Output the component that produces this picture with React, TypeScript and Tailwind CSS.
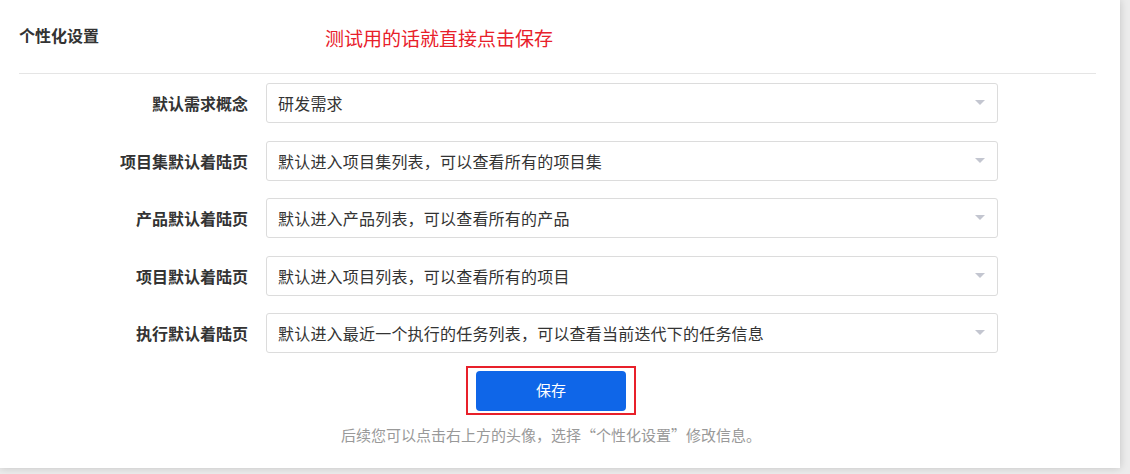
const fields = [
  { label: "默认需求概念", value: "研发需求" },
  { label: "项目集默认着陆页", value: "默认进入项目集列表，可以查看所有的项目集" },
  { label: "产品默认着陆页", value: "默认进入产品列表，可以查看所有的产品" },
  { label: "项目默认着陆页", value: "默认进入项目列表，可以查看所有的项目" },
  {
    label: "执行默认着陆页",
    value: "默认进入最近一个执行的任务列表，可以查看当前迭代下的任务信息",
  },
];

const SelectBox = ({ value }: { value: string }) => (
  <div className="w-[732px] h-10 flex items-center justify-between pl-[11px] pr-[11px] border border-[#dcdcdc] rounded-[3px] bg-white">
    <span className="text-[16px] tracking-[0.2px] text-[#333]">{value}</span>
    <svg width="10" height="6" viewBox="0 0 10 6" className="mr-[1px]">
      <path d="M0 0 L10 0 L5 5 Z" fill="#c3c6d0" />
    </svg>
  </div>
);

const App = () => {
  return (
    <div
      className="w-[1130px] h-[474px] bg-[#ececec] overflow-hidden"
      style={{ fontFamily: '"Noto Sans CJK SC", "Noto Sans", sans-serif' }}
    >
      <div className="w-[1120px] h-[468px] bg-white shadow-[0_0_8px_rgba(0,0,0,0.18)] pl-[19px] pr-[24px]">
        {/* Heading */}
        <div className="h-[74px] flex items-center border-b border-[#e5e5e5]">
          <h2 className="w-[306px] text-[16px] font-bold text-[#333] -mt-[3px]">
            个性化设置
          </h2>
          <p className="text-[19px] text-[#e8202a] mt-[3px]">
            测试用的话就直接点击保存
          </p>
        </div>

        {/* Fields */}
        <div className="flex flex-col gap-[17.5px] pt-[9px]">
          {fields.map((f) => (
            <div key={f.label} className="flex items-center">
              <label className="w-[229px] text-right text-[16px] font-bold text-[#333]">
                {f.label}
              </label>
              <div className="ml-[18px]">
                <SelectBox value={f.value} />
              </div>
            </div>
          ))}
        </div>

        {/* Save */}
        <div className="w-[1064px] flex flex-col items-center">
          <div className="mt-[13px] w-[170px] h-[49px] border-2 border-[#e8202a] flex items-center justify-center">
            <button className="w-[150px] h-10 rounded-[4px] bg-[#0f66e8] text-white text-[15px]">
              保存
            </button>
          </div>
          <p className="mt-[9px] text-[15px] text-[#999]">
            后续您可以点击右上方的头像，选择“个性化设置”修改信息。
          </p>
        </div>
      </div>
    </div>
  );
};

export default App;
